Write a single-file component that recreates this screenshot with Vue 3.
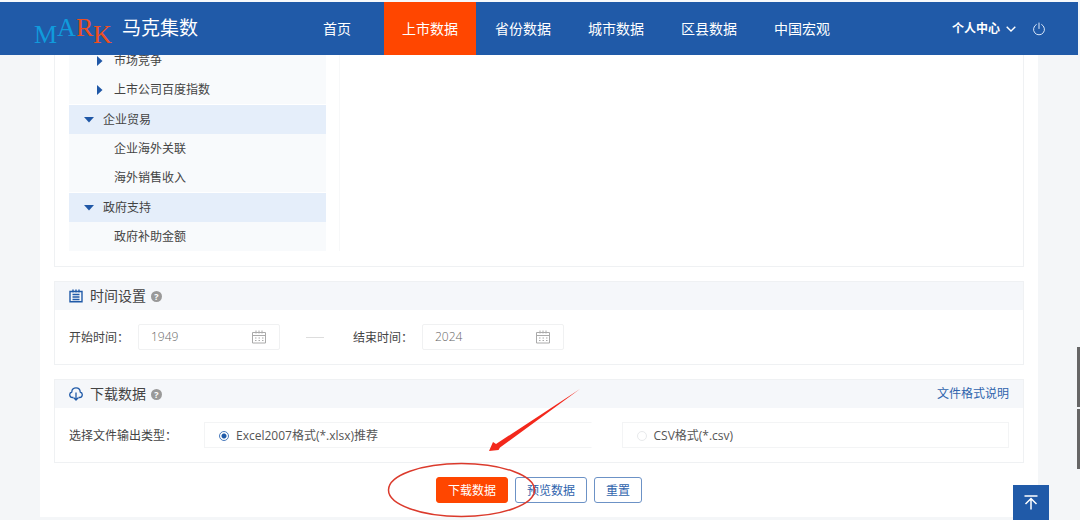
<script setup>
import { ref } from 'vue'

const nav = ['首页', '上市数据', '省份数据', '城市数据', '区县数据', '中国宏观']
const groups = [
  { items: ['市场竞争', '上市公司百度指数'], nested: true },
  { title: '企业贸易', items: ['企业海外关联', '海外销售收入'] },
  { title: '政府支持', items: ['政府补助金额'] }
]
const start = ref('1949')
const end = ref('2024')
const format = ref('xlsx')
</script>

<template>
  <div class="page">
    <header class="topbar">
      <a class="brand" href="#">
        <svg class="logo" width="80" height="40" viewBox="0 0 80 40" role="img" aria-label="MARK">
          <g font-family="Liberation Serif, serif" font-size="26">
            <text x="0" y="34" fill="#109bdc">M</text>
            <text x="23" y="27" fill="#109bdc">A</text>
            <text x="42" y="27" fill="#ee4f20">R</text>
            <text x="59" y="34" fill="#ee4f20">K</text>
          </g>
        </svg>
        <span class="name">马克集数</span>
      </a>
      <nav class="nav">
        <a v-for="(n, i) in nav" :key="n" href="#" :class="{ home: i === 0, active: i === 1 }">{{ n }}</a>
      </nav>
      <div class="account">
        <button class="user" type="button">
          个人中心
          <svg width="10" height="6" viewBox="0 0 10 6" fill="none" stroke="#fff" stroke-width="1.4"><path d="M.7.8 5 5 9.300.8" /></svg>
        </button>
        <button class="power" type="button" aria-label="退出">
          <svg width="14" height="14" viewBox="0 0 14 14" fill="none" stroke="#dbe8fa" stroke-width="1" stroke-linecap="round"><path d="M4.300 2.500A5.500 5.500 0 1 0 9.700 2.500M7 1v5.500" /></svg>
        </button>
      </div>
    </header>

    <main class="content">
      <section class="panel picker">
        <div class="tree">
          <div v-for="(g, k) in groups" :key="k" class="group">
            <button v-if="g.title" class="row head" type="button">
              <svg width="10" height="6" viewBox="0 0 10 6"><path d="M0 0h10L5 5.500z" fill="#1f57a6" /></svg>
              {{ g.title }}
            </button>
            <button v-for="t in g.items" :key="t" class="row" :class="g.nested ? 'branch' : 'leaf'" type="button">
              <svg v-if="g.nested" width="6" height="10" viewBox="0 0 6 10"><path d="M0 0v10l5.500-5z" fill="#1f57a6" /></svg>
              {{ t }}
            </button>
          </div>
        </div>
        <div class="detail"></div>
      </section>

      <section class="panel">
        <div class="title">
          <svg width="14" height="14" viewBox="0 0 14 14" fill="none" stroke="#205aa8" stroke-width="1.400"><path d="M1 2.500h12v10.300H1zM3.500 5.500h7M3.500 8h7M3.500 10.500h7M4 .5v3M7 .5v3M10 .5v3" /></svg>
          <h2>时间设置</h2>
          <span class="help">?</span>
        </div>
        <div class="body">
          <label for="start">开始时间：</label>
          <div class="date">
            <input id="start" v-model="start" type="text" />
            <svg width="14" height="14" viewBox="0 0 14 14" fill="none" stroke="#aaa"><path d="M.5 2.500h13v10.500H.5zM.5 5.500h13M4 .5v3M10 .5v3M7 .5v3" /><path d="M3 8h8.500M3 10.500h8.500" stroke-dasharray="1.500 2" /></svg>
          </div>
          <span class="dash"></span>
          <label for="end">结束时间：</label>
          <div class="date">
            <input id="end" v-model="end" type="text" />
            <svg width="14" height="14" viewBox="0 0 14 14" fill="none" stroke="#aaa"><path d="M.5 2.500h13v10.500H.5zM.5 5.500h13M4 .5v3M10 .5v3M7 .5v3" /><path d="M3 8h8.500M3 10.500h8.500" stroke-dasharray="1.500 2" /></svg>
          </div>
        </div>
      </section>

      <section class="panel">
        <div class="title">
          <svg width="14" height="14" viewBox="0 0 14 14" fill="none" stroke="#205aa8" stroke-width="1.300" stroke-linejoin="round"><path d="M4.500 10.500H3.500A2.800 2.800 0 0 1 2.800 5C2.800-.6 11.200-.6 11.200 5A2.800 2.800 0 0 1 10.500 10.500H9.500M7 5.500v7.500M4.800 10.800 7 13l2.200-2.200" /></svg>
          <h2>下载数据</h2>
          <span class="help">?</span>
          <a class="spec" href="#">文件格式说明</a>
        </div>
        <div class="body">
          <span class="caption">选择文件输出类型：</span>
          <div class="options">
            <label class="option open"><input v-model="format" type="radio" name="format" value="xlsx" />Excel2007格式(*.xlsx)推荐</label>
            <label class="option"><input v-model="format" type="radio" name="format" value="csv" />CSV格式(*.csv)</label>
          </div>
        </div>
      </section>

      <div class="actions">
        <div class="buttons">
          <button class="btn primary" type="button">下载数据</button>
          <button class="btn" type="button">预览数据</button>
          <button class="btn" type="button">重置</button>
          <svg class="mark" width="196" height="134" viewBox="0 0 196 134" aria-hidden="true">
            <ellipse cx="74.500" cy="103" rx="73" ry="26.500" fill="none" stroke="#db3a2c" stroke-width="1.500" />
            <path d="M193 2 113 60.500 111.500 63 102 64 106 55 109 57z" fill="#f3281c" />
          </svg>
        </div>
      </div>
    </main>

    <button class="totop" type="button" aria-label="返回顶部">
      <svg width="14" height="15" viewBox="0 0 14 15" fill="none" stroke="#fff" stroke-width="1.500"><path d="M.5 1h13M7 14.500V4M1.500 9 7 3.500 12.500 9" /></svg>
    </button>
    <div class="thumb"><span></span><span></span></div>
  </div>
</template>

<style>
html, body { margin: 0; background: #f4f6f8; overflow: hidden; }
</style>

<style scoped>
.page {
  min-height: 100vh;
  box-sizing: border-box;
  padding-top: 2px;
  background: #f4f6f8;
  color: #444;
  font: 12px/18px "Open Sans", "Noto Sans CJK SC", sans-serif;
}
button { margin: 0; padding: 0; border: 0; background: none; font: inherit; color: inherit; cursor: pointer; }
a { text-decoration: none; color: inherit; }
svg { display: block; flex: none; }
.topbar {
  position: relative;
  z-index: 2;
  display: flex;
  height: 53px;
  margin-right: 2px;
  background: #205aa8;
  box-shadow: 0 -2px 0 #f7f9fb;
  color: #fff;
}
.brand { display: flex; align-items: center; flex: none; width: 257px; padding-left: 34px; }
.name { margin: 0 0 2px 8px; font-size: 19px; line-height: 26px; }
.nav { display: flex; gap: 1px; font-size: 14px; }
.nav a { display: flex; align-items: center; padding: 0 18px; }
.nav .home { padding: 0 32px; }
.nav .active { background: #ff4600; }
.account { display: flex; align-items: center; gap: 16px; margin-left: auto; padding-right: 32px; }
.user { display: flex; align-items: center; gap: 6px; font-weight: 700; }
.content { margin: -9px 42px 0 40px; padding: 0 14px 14px; background: #fff; }
.panel { margin-bottom: 14px; border: 1px solid #eff1f3; }
.picker { display: flex; gap: 13px; padding: 0 14px 15px; border-top: 0; }
.tree { width: 257px; }
.group { margin-bottom: 1px; background: #f8fafc; }
.group:last-child { margin-bottom: 0; }
.row { display: flex; align-items: center; box-sizing: border-box; width: 100%; height: 29px; padding-top: 1px; text-align: left; }
.head { gap: 9px; padding-left: 15px; background: #e5eefa; }
.branch { gap: 11px; padding-left: 28px; }
.leaf { padding-left: 45px; }
.detail { flex: 1; border-left: 1px solid #f7f8f9; }
.title { display: flex; align-items: center; height: 28px; padding: 0 14px; background: #f5f7fa; }
.title h2 { margin: 0 5px 0 7px; font-size: 14px; line-height: 20px; font-weight: 400; }
.help { width: 11px; height: 11px; border-radius: 50%; background: #999; color: #fff; font-size: 9px; line-height: 11px; font-weight: 700; text-align: center; }
.spec { margin-left: auto; color: #2f64ad; }
.body { display: flex; align-items: center; height: 26px; padding: 14px; }
.body > label { flex: none; width: 69px; }
.body > label, .caption { padding-top: 2px; }
.date { display: flex; align-items: center; box-sizing: border-box; width: 142px; height: 26px; padding: 0 13px 0 12px; border: 1px solid #f0f1f2; border-radius: 2px; }
.date input { flex: 1; min-width: 0; padding: 0; border: 0; outline: 0; background: none; color: #666; font: inherit; font-weight: 300; }
.dash { width: 18px; height: 1px; margin: 0 29px 0 26px; background: #ddd; }
.caption { flex: none; width: 135px; }
.options { display: grid; grid-template-columns: 1fr 1fr; gap: 30px; flex: 1; }
.option { display: flex; align-items: center; gap: 7px; box-sizing: border-box; height: 26px; padding: 2px 0 0 14px; border: 1px solid #f3f4f5; color: #555; }
.open { border-right-color: transparent; }
.option input { appearance: none; box-sizing: border-box; width: 10px; height: 10px; margin: 0; border: 1px solid #e8eaec; border-radius: 50%; }
.option input:checked { border-color: #4a7abc; background: radial-gradient(circle, #205aa8 2px, #fff 3px); }
.actions { display: flex; justify-content: center; }
.buttons { position: relative; display: flex; gap: 7px; }
.btn { height: 26px; padding: 2px 11px 0; border: 1px solid #6c92c6; border-radius: 3px; background: #fff; color: #2f64ad; }
.primary { border-color: #ff4600; background: #ff4600; color: #fff; }
.mark { position: absolute; left: -49px; top: -90px; pointer-events: none; }
.totop { position: fixed; right: 31px; bottom: 0; display: flex; align-items: center; justify-content: center; width: 36px; height: 35px; background: #205aa8; }
.thumb { position: fixed; right: 0; top: 347px; display: grid; gap: 2px; width: 3px; }
.thumb span { height: 60px; background: #666; }
</style>
